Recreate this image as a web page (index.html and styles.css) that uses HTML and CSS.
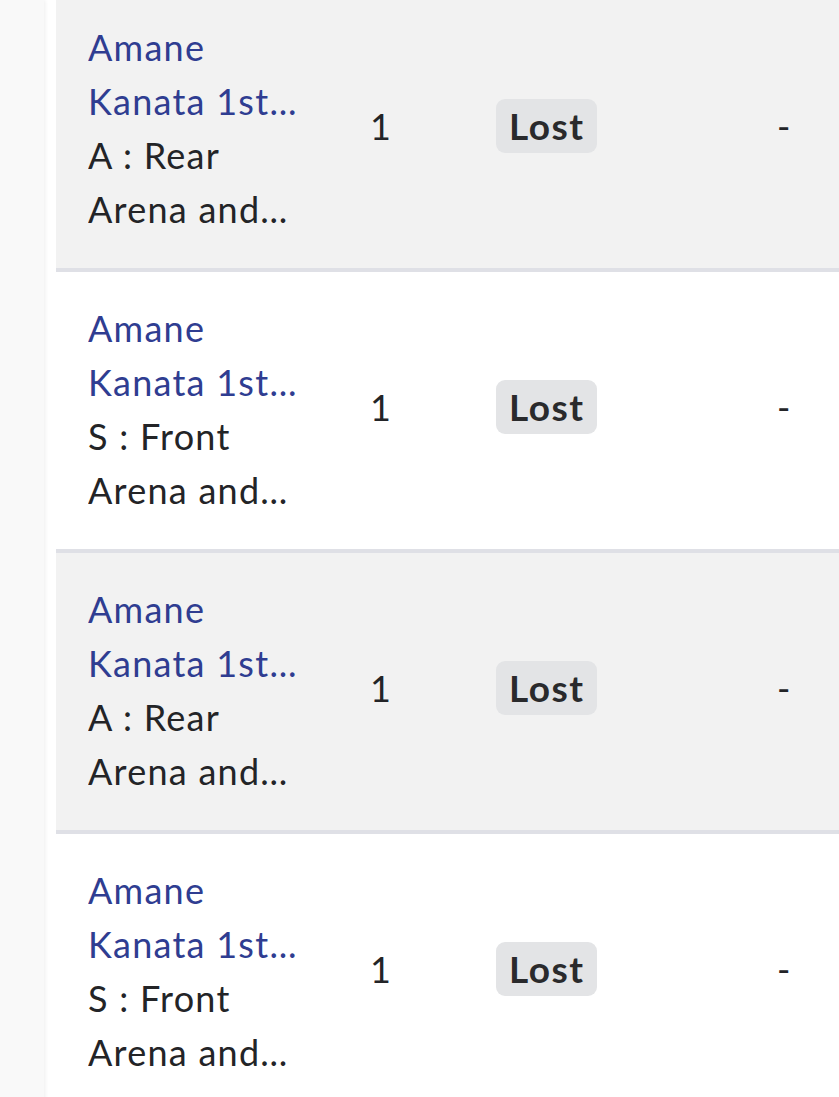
FILE: index.html
```html
<!DOCTYPE html>
<html>
<head>
<meta charset="utf-8">
<link rel="stylesheet" href="styles.css">
</head>
<body>
<div class="page">
  <aside class="sidebar"></aside>
  <main class="content">
    <div class="table">
      <div class="row alt">
        <div class="cell name">
          <a class="title" href="#">Amane Kanata 1st Live Concert Ticket</a>
          <div class="sub">A : Rear Arena and Stand Seats</div>
        </div>
        <div class="cell qty">1</div>
        <div class="cell status"><span class="badge">Lost</span></div>
        <div class="cell dash">-</div>
      </div>
      <div class="row">
        <div class="cell name">
          <a class="title" href="#">Amane Kanata 1st Live Concert Ticket</a>
          <div class="sub">S : Front Arena and Stand Seats</div>
        </div>
        <div class="cell qty">1</div>
        <div class="cell status"><span class="badge">Lost</span></div>
        <div class="cell dash">-</div>
      </div>
      <div class="row alt">
        <div class="cell name">
          <a class="title" href="#">Amane Kanata 1st Live Concert Ticket</a>
          <div class="sub">A : Rear Arena and Stand Seats</div>
        </div>
        <div class="cell qty">1</div>
        <div class="cell status"><span class="badge">Lost</span></div>
        <div class="cell dash">-</div>
      </div>
      <div class="row">
        <div class="cell name">
          <a class="title" href="#">Amane Kanata 1st Live Concert Ticket</a>
          <div class="sub">S : Front Arena and Stand Seats</div>
        </div>
        <div class="cell qty">1</div>
        <div class="cell status"><span class="badge">Lost</span></div>
        <div class="cell dash">-</div>
      </div>
    </div>
  </main>
</div>
</body>
</html>
```
FILE: styles.css
```css
html, body {
  margin: 0;
  padding: 0;
  background: #ffffff;
  overflow: hidden;
}
body {
  font-family: Lato, "Noto Sans", sans-serif;
  color: #232427;
}
.page {
  display: flex;
  min-height: 1097px;
}
.sidebar {
  width: 44px;
  flex: none;
  background: #f9f9f9;
  box-shadow: 1px 0 4px rgba(0, 0, 0, 0.07);
  position: relative;
  z-index: 1;
}
.content {
  flex: 1;
  padding-left: 12px;
  overflow: hidden;
}
.table {
  margin-top: -9px;
}
.row {
  display: grid;
  grid-template-columns: 282px 126px 279px 1fr;
  align-items: center;
  padding: 28px 0 32px 32px;
  height: 217px;
  border-bottom: 4px solid #dfe0e6;
  background: #ffffff;
}
.row.alt {
  background: #f2f2f2;
}
.cell {
  font-size: 36px;
  line-height: 54px;
  letter-spacing: 0.035em;
}
.name {
  width: 220px;
}
.title, .sub {
  display: -webkit-box;
  -webkit-box-orient: vertical;
  -webkit-line-clamp: 2;
  overflow: hidden;
  text-overflow: ellipsis;
}
.title {
  color: #2f3d91;
  text-decoration: none;
}
.sub {
  color: #232427;
}
.qty, .status, .dash {
  margin-bottom: 4px;
}
.qty {
  color: #232427;
}
.badge {
  display: inline-block;
  background: #e3e4e6;
  border-radius: 9px;
  padding: 0 13px;
  height: 54px;
  line-height: 54px;
  font-weight: 700;
  font-size: 37px;
  color: #2a2a2c;
  letter-spacing: 0.04em;
}
.dash {
  padding-left: 2px;
}
```
